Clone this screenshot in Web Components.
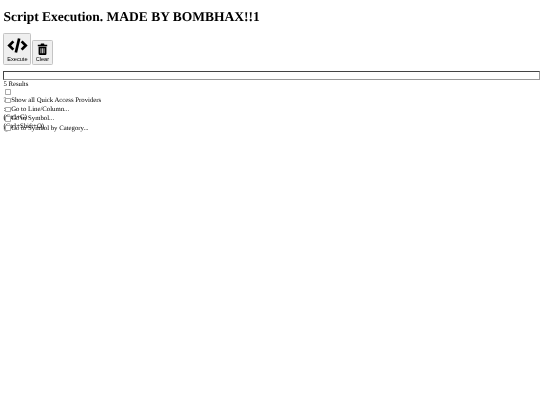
<!DOCTYPE html>
<html>
<head>
<meta charset="utf-8">
<title>Script Execution</title>
<style>
  body { margin: 3.4px 0 0 3.4px; font-family: "Liberation Serif", serif; font-size: 6.75px; color: #000; background: #fff; text-rendering: geometricPrecision; }
  script-page { filter: blur(0.35px); }
</style>
</head>
<body>
<script-page></script-page>
<script>
class ToolButton extends HTMLElement {
  constructor() {
    super();
    this.attachShadow({ mode: "open" });
    this.shadowRoot.innerHTML = `
    <style>
      :host { display: inline-block; vertical-align: bottom; }
      button {
        display: flex;
        flex-direction: column;
        align-items: center;
        gap: 1.7px;
        padding: 1.4px 2.5px 1.5px;
        font: 5.6px "Liberation Sans", sans-serif;
        color: #000;
        background: #efefef;
        border: 0.85px solid #c4c4c4;
        border-radius: 1.3px;
      }
      ::slotted(svg) { display: block; }
    </style>
    <button><slot name="icon"></slot><span>${this.getAttribute("label")}</span></button>`;
  }
}

class QuickItem extends HTMLElement {
  constructor() {
    super();
    this.attachShadow({ mode: "open" });
    const hint = this.getAttribute("hint");
    this.shadowRoot.innerHTML = `
    <style>
      :host { display: block; position: relative; height: 9.3px; line-height: 9.3px; white-space: nowrap; }
      .row { display: flex; align-items: center; }
      .prefix { width: 0; }
      input {
        appearance: none; box-sizing: border-box; flex: none;
        margin: 0 0.6px 0 1.7px; width: 5.5px; height: 5.5px;
        border: 0.5px solid #aaa; border-radius: 0.8px; background: #fff;
      }
      .hint { position: absolute; left: 0; top: 8px; }
    </style>
    <div class="row"><span class="prefix">${this.getAttribute("prefix")}</span><input type="checkbox"><slot></slot></div>
    ${hint ? `<span class="hint">${hint}</span>` : ""}`;
  }
}

class ScriptPage extends HTMLElement {
  constructor() {
    super();
    this.attachShadow({ mode: "open" });
    this.shadowRoot.innerHTML = `
    <style>
      :host { display: block; width: 537px; }
      h1 { font-size: 13.5px; line-height: 15.6px; font-weight: bold; margin: 6.1px 0 8.2px; }
      .tools { display: flex; align-items: flex-end; gap: 0.8px; margin-bottom: 6.5px; }
      .search {
        display: block; box-sizing: border-box; width: 100%; height: 9px; margin: 0; padding: 0;
        border: 1px solid; border-color: #444 #999 #999 #444; background: #fff;
      }
      .count { padding-top: 1px; line-height: 7.6px; }
      .all {
        appearance: none; display: block; box-sizing: border-box;
        width: 5.5px; height: 5.5px; margin: 0.3px 0 0.9px 1.7px;
        border: 0.5px solid #aaa; border-radius: 0.8px; background: #fff;
      }
    </style>
    <h1>Script Execution. MADE BY BOMBHAX!!1</h1>
    <div class="tools">
      <tool-button label="Execute">
        <svg slot="icon" width="21" height="19" viewBox="0 0 50 46"><path d="M15 13 5 23l10 10M35 13l10 10-10 10M29 6 21 40" fill="none" stroke="#000" stroke-width="6.500"/></svg>
      </tool-button>
      <tool-button label="Clear">
        <svg slot="icon" width="11" height="12" viewBox="0 0 28 30"><path d="M10 1h8l1 3h7v4H2V4h7zM4 9h20v18a3 3 0 0 1-3 3H7a3 3 0 0 1-3-3zm5 4v13h2V13zm4 0v13h2V13zm4 0v13h2V13z" fill-rule="evenodd"/></svg>
      </tool-button>
    </div>
    <input class="search">
    <div class="count">5 Results</div>
    <input class="all" type="checkbox">
    <quick-item prefix="?">Show all Quick Access Providers</quick-item>
    <quick-item prefix=":" hint="(Ctrl+G)">Go to Line/Column...</quick-item>
    <quick-item prefix="@" hint="(Ctrl+Shift+O)">Go to Symbol...</quick-item>
    <quick-item prefix="@:">Go to Symbol by Category...</quick-item>`;
  }
}

customElements.define("tool-button", ToolButton);
customElements.define("quick-item", QuickItem);
customElements.define("script-page", ScriptPage);
</script>
</body>
</html>
